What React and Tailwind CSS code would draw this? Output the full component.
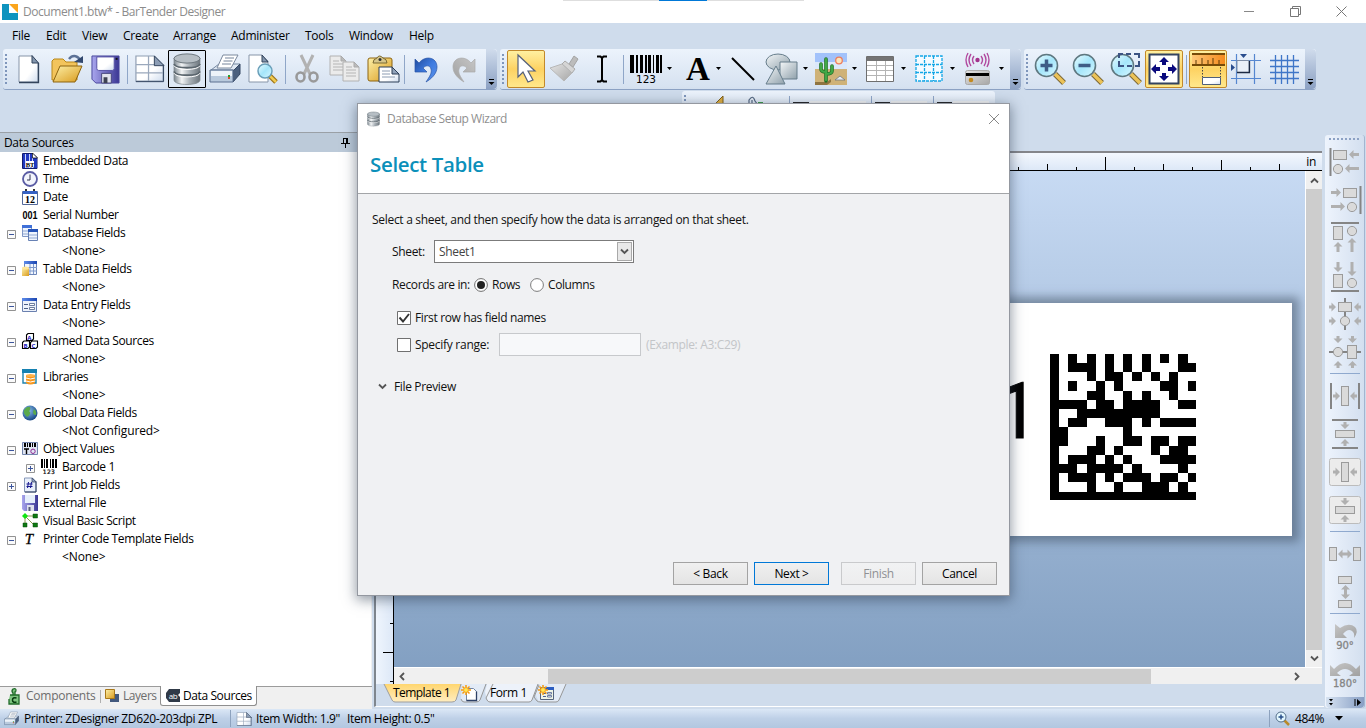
import React from "react";

const Svg = ({ w, h, children, className = "" }) => (
  <svg width={w} height={h} viewBox={`0 0 ${w} ${h}`} className={`shrink-0 block overflow-visible ${className}`} fill="none">
    {children}
  </svg>
);

const Defs = () => (
  <svg width="0" height="0" className="absolute">
    <defs>
      <linearGradient id="steel" x1="0" y1="0" x2="1" y2="0">
        <stop offset="0" stopColor="#7d8890" /><stop offset=".3" stopColor="#f2f4f5" />
        <stop offset=".6" stopColor="#aab2b8" /><stop offset="1" stopColor="#6d767d" />
      </linearGradient>
      <linearGradient id="page" x1="0" y1="0" x2="1" y2="1">
        <stop offset="0" stopColor="#fff" /><stop offset=".6" stopColor="#fff" /><stop offset="1" stopColor="#cfdcee" />
      </linearGradient>
      <linearGradient id="gold" x1="0" y1="0" x2="1" y2="1">
        <stop offset="0" stopColor="#fdf0a8" /><stop offset="1" stopColor="#d99a1c" />
      </linearGradient>
      <linearGradient id="tab" x1="0" y1="0" x2="0" y2="1">
        <stop offset="0" stopColor="#ffd66f" /><stop offset="1" stopColor="#ffedc0" />
      </linearGradient>
      <linearGradient id="violet" x1="0" y1="0" x2="1" y2="0">
        <stop offset="0" stopColor="#a9a6ee" /><stop offset="1" stopColor="#3b3794" />
      </linearGradient>
      <linearGradient id="blue" x1="0" y1="0" x2="1" y2="1">
        <stop offset="0" stopColor="#1f4a9c" /><stop offset=".5" stopColor="#3f7be0" /><stop offset="1" stopColor="#5f95ea" />
      </linearGradient>
      <linearGradient id="shape" x1="0" y1="0" x2="1" y2="1">
        <stop offset="0" stopColor="#f4f7f8" /><stop offset="1" stopColor="#8fa0ab" />
      </linearGradient>
      <linearGradient id="grayg" x1="0" y1="0" x2="1" y2="1">
        <stop offset="0" stopColor="#e4e4e4" /><stop offset="1" stopColor="#a6a6a6" />
      </linearGradient>
      <linearGradient id="grayd" x1="0" y1="0" x2="1" y2="1">
        <stop offset="0" stopColor="#c6c6c6" /><stop offset="1" stopColor="#a0a0a0" />
      </linearGradient>
      <linearGradient id="lens" x1="0" y1="0" x2="1" y2="1">
        <stop offset="0" stopColor="#eafcff" /><stop offset=".5" stopColor="#a5e6fb" /><stop offset="1" stopColor="#d8f7ff" />
      </linearGradient>
      <linearGradient id="orange" x1="0" y1="0" x2="1" y2="0">
        <stop offset="0" stopColor="#ffc877" /><stop offset="1" stopColor="#f58a1c" />
      </linearGradient>
      <linearGradient id="bluehead" x1="0" y1="0" x2="1" y2="0">
        <stop offset="0" stopColor="#5d8bea" /><stop offset="1" stopColor="#1c46b0" />
      </linearGradient>
      <radialGradient id="ocean" cx=".4" cy=".35" r=".7">
        <stop offset="0" stopColor="#8cc0f0" /><stop offset="1" stopColor="#10407f" />
      </radialGradient>
    </defs>
  </svg>
);

/* ---------- main toolbar icons ---------- */
const NewDoc = () => (
  <Svg w={24} h={30}>
    <path d="M2 2h13l6 7v19H2z" fill="url(#page)" stroke="#8795a8" /><path d="M21.500 9v19.500H2" stroke="#33445c" strokeWidth="1.300" />
    <path d="M15 1.500v7.500h6.500z" fill="#8496ae" stroke="#33445c" />
  </Svg>
);
const OpenIcon = () => (
  <Svg w={34} h={30}>
    <path d="M2 26V7l2-2h9l3 3h11v18z" fill="#f3c45c" stroke="#b88718" />
    <path d="M3 28L10 12h22l-7 16z" fill="url(#gold)" stroke="#8d6410" />
    <path d="M19 5c4-5 10-3 11 2" stroke="#5c7196" strokeWidth="2.500" /><path d="M24 8l9 1V2z" fill="#31486f" />
  </Svg>
);
const SaveIcon = ({ s = 30 }) => (
  <svg width={s} height={s} viewBox="0 0 30 30" className="block shrink-0">
    <path d="M1 1h28v28H5l-4-4z" fill="url(#violet)" stroke="#4a479c" />
    <path d="M6 2h18v12q0 2-2 2H8q-2 0-2-2z" fill="url(#page)" stroke="#5652a5" />
    <path d="M11 19h10v10H11z" fill="#e1e3ec" stroke="#44447a" /><path d="M13 23h4v6h-4z" fill="#3e4253" /><path d="M25.500 3h2v2h-2z" fill="#111" />
  </svg>
);
const TableDoc = ({ s = 32 }) => (
  <svg width={s} height={s * 0.875} viewBox="0 0 32 28" className="block shrink-0">
    <path d="M2 1h19l9 9v17H2z" fill="url(#page)" stroke="#8e9db2" strokeWidth="1.200" />
    <path d="M2 10h20M2 18.500h28M15 1v26" stroke="#9aa8bc" strokeWidth="1.300" /><path d="M30.500 10v17.500H2" stroke="#31435e" fill="none" />
    <path d="M21 1v10h10z" fill="#8c9db5" stroke="#33445c" />
  </svg>
);
const Database = ({ w = 28, h = 32 }) => (
  <svg width={w} height={h} viewBox="0 0 28 32" className="block shrink-0">
    <path d="M1 5v22c0 6 26 6 26 0V5z" fill="url(#steel)" stroke="#7c858b" strokeWidth=".7" />
    <ellipse cx="14" cy="5.500" rx="13" ry="4.600" fill="#b6bec4" stroke="#6d777e" />
    <path d="M1 11c2 5 24 5 26 0M1 18.500c2 5 24 5 26 0" stroke="#5b666e" strokeWidth="1.800" fill="none" />
    <path d="M1 12.700c2 5 24 5 26 0M1 20.200c2 5 24 5 26 0" stroke="#fff" fill="none" />
  </svg>
);
const Printer = ({ s = 32 }) => (
  <svg width={s} height={s} viewBox="0 0 32 32" className="block shrink-0">
    <path d="M2 17l8-6h21l-6 6z" fill="#dfe8f3" stroke="#7487a0" />
    <path d="M14 2h15l-7 13H8z" fill="#fff" stroke="#7b899d" /><path d="M16 5h9M14.500 8h9M13 11h9" stroke="#75849a" />
    <path d="M24 18l7-7v10l-7 8z" fill="#4a5f7e" stroke="#344763" />
    <path d="M1 17h23v12H1z" fill="#b9cadd" stroke="#5c7190" /><path d="M2 18h21v5H2z" fill="#edf3f9" /><path d="M19 22h2v2h-2z" fill="#26a32e" /><path d="M19 24h2v2h-2z" fill="#dd4a29" />
  </svg>
);
const Preview = () => (
  <Svg w={32} h={30}>
    <path d="M2 1h13l6 6v21H2z" fill="#fff" stroke="#8795a8" /><path d="M15 1v7h6z" fill="#8496ae" stroke="#33445c" />
    <path d="M21 20l8 8" stroke="#9b7016" strokeWidth="5" /><path d="M21 20l8 8" stroke="#f0ca50" strokeWidth="2.500" />
    <circle cx="18" cy="17" r="7" fill="url(#lens)" stroke="#6b9fb9" strokeWidth="1.500" />
  </Svg>
);
const Cut = () => (
  <Svg w={24} h={30}>
    <path d="M6 1l9 19M18 1L9 20" stroke="#b2b2b2" strokeWidth="3" />
    <ellipse cx="5.500" cy="23" rx="4" ry="4.500" stroke="#999" strokeWidth="2.600" /><ellipse cx="18.500" cy="23" rx="4" ry="4.500" stroke="#999" strokeWidth="2.600" />
  </Svg>
);
const Copy = () => (
  <Svg w={32} h={28}>
    {[[1, 1], [14, 7]].map(([x, y]) => (
      <g key={x} transform={`translate(${x} ${y})`}>
        <path d="M0 0h11l5 5v14H0z" fill="#ebebeb" stroke="#b2b2b2" /><path d="M11 0v5h5z" fill="#bbb" stroke="#aaa" />
        <path d="M3 5h6M3 8h10M3 11h10M3 14h10" stroke="#b5b5b5" />
      </g>
    ))}
  </Svg>
);
const Paste = () => (
  <Svg w={34} h={30}>
    <rect x="2" y="4" width="24" height="23" rx="2" fill="url(#gold)" stroke="#8d6410" />
    <path d="M7 9q0-4 4-5 2-4 6 0 4 1 4 5z" fill="#d6c68b" stroke="#7b6a33" /><circle cx="14" cy="5.500" r="1.500" fill="#333" />
    <path d="M13 13h13l7 7v8H13z" fill="url(#page)" stroke="#2d3e57" /><path d="M26 13v7h7z" fill="#93a4bb" stroke="#2d3e57" />
    <path d="M16 17h8M16 20h8M16 23h13" stroke="#8c9cb2" />
  </Svg>
);
const Undo = ({ flip }) => (
  <svg width="26" height="28" viewBox="0 0 26 28" className={flip ? "block -scale-x-100" : "block"}>
    <path d="M2 4l4 4C12 0 24 2 24 12c0 7-6 12-11 15 4-6 6-9 5-13-1-4-5-4-8-1l4 4H2z" fill={flip ? "url(#grayd)" : "url(#blue)"} stroke={flip ? "#aaa" : "#2a55a6"} strokeWidth=".7" />
  </svg>
);
const Pointer = () => (
  <Svg w={22} h={30}><path d="M3 1v22l5-5 5 10 5-2-5-9h7z" fill="#fff" stroke="#56617a" strokeWidth="1.200" /></Svg>
);
const Brush = () => (
  <Svg w={30} h={28}>
    <path d="M20 9l5-8 4 3-5 8z" fill="#bcbcbc" stroke="#a4a4a4" /><path d="M16 6l10 8-3 4-10-9z" fill="#d5d5d5" stroke="#aaa" />
    <path d="M13 9L1 13l14 13 8-8z" fill="url(#grayg)" stroke="#b7b7b7" />
  </Svg>
);
const IBeam = () => (<Svg w={14} h={28}><path d="M2 1.500h3.500L7 3l1.500-1.500H12M2 26.500h3.500L7 25l1.500 1.500H12M7 3v22" stroke="#000" strokeWidth="2" /></Svg>);
const Barcode = () => (
  <Svg w={33} h={33}>
    <path d="M0 2h4v18H0zM6 2h2v18H6zM10 2h3v18h-3zM15 2h2v18h-2zM18 2h3v18h-3zM23 2h1v18h-1zM26 2h3v18h-3zM30 2h2v18h-2z" fill="#000" />
    <text x="16" y="30" fontSize="10.500" textAnchor="middle" fill="#000" fontFamily="DejaVu Sans" letterSpacing="0">123</text>
  </Svg>
);
const LetterA = () => <span className="relative left-[3px] font-['Liberation_Serif',serif] text-[33px] font-bold leading-[36px] tracking-normal text-black">A</span>;
const LineIcon = () => <Svg w={26} h={26}><path d="M2 2l22 22" stroke="#000" strokeWidth="2" /></Svg>;
const Shapes = () => (
  <Svg w={34} h={33}>
    <ellipse cx="13" cy="9" rx="12" ry="8" fill="url(#shape)" stroke="#667d8b" />
    <path d="M15 9h17v17H15z" fill="url(#shape)" stroke="#667d8b" /><path d="M11 13l9 18H1z" fill="url(#shape)" stroke="#667d8b" />
  </Svg>
);
const Picture = () => (
  <Svg w={32} h={32}>
    <path d="M0 0h32v17H0z" fill="#a2c2fb" /><path d="M0 9h32v8H0z" fill="#dbe8fb" /><path d="M0 16h32v16H0z" fill="#cfb277" />
    <path d="M0 29h12l4-3v3l-4 3H0z" fill="#8f7440" /><circle cx="24" cy="7.500" r="3.300" fill="#fbe5bd" stroke="#ee7d5c" strokeWidth="1.300" />
    <path d="M11 6v22M6 11v5q0 3 5 3M17 13v5q0 3-6 3" stroke="#216f26" strokeWidth="3.600" strokeLinecap="round" />
    <path d="M11 6v21M6 11v5q0 3 5 3M17 13v5q0 3-6 3" stroke="#41a847" strokeWidth="2.200" strokeLinecap="round" />
    <path d="M20 27l5-4 5 4z" fill="#e5eaf1" stroke="#66707c" strokeWidth=".7" />
  </Svg>
);
const TableIcon = () => (
  <Svg w={28} h={26}>
    <path d="M.5.5h27v25H.5z" fill="#fff" stroke="#6e6e6e" /><path d="M1 1h26v4H1z" fill="#747474" />
    <path d="M1 9.500h26M1 14.500h26M1 19.500h26M10.500 5v20M19.500 5v20" stroke="#b4b4b4" />
  </Svg>
);
const DashGrid = () => (
  <Svg w={28} h={28}><path d="M1 1h26v25H1zM1 9.500h26M1 17.500h26M9.500 1v25M18.500 1v25" fill="#f5fbff" stroke="#14a7e6" strokeDasharray="3 1" strokeWidth="1.300" /></Svg>
);
const Rfid = () => (
  <Svg w={26} h={34}>
    <circle cx="12.500" cy="8" r="2.200" fill="#a3338d" />
    <path d="M9 4q-3 4 0 8M16 4q3 4 0 8M6 2q-4 6 0 12M19 2q4 6 0 12M3 1q-4 7 0 14M22 1q4 7 0 14" stroke="#b14a9f" strokeWidth="1.400" />
    <rect x=".5" y="18.500" width="24" height="14" rx="2" fill="url(#grayg)" stroke="#a9a9a9" /><path d="M1 21h23v3H1z" fill="#000" /><circle cx="6" cy="28" r="2.300" fill="#c48a1f" />
  </Svg>
);
const Magnifier = ({ kind }) => (
  <Svg w={36} h={34}>
    <path d="M23 22l9 9" stroke="#7a6736" strokeWidth="5.500" /><path d="M23 22l9 9" stroke="#ecc358" strokeWidth="3.500" />
    <circle cx="14.500" cy="13.500" r="11" fill="url(#lens)" stroke="#5f7880" strokeWidth="1.600" />
    {kind !== "area" && <path d="M8.500 13.500h12" stroke="#3f5c86" strokeWidth="3.500" />}
    {kind === "plus" && <path d="M14.500 7.500v12" stroke="#3f5c86" strokeWidth="3.500" />}
    {kind === "area" && <path d="M11 6V2h4M18 2h5M26 2h5v4M31 9v5h-4M24 14h-5M16 14h-5V9" stroke="#3c5483" strokeWidth="2" />}
  </Svg>
);
const FitIcon = () => (
  <Svg w={32} h={32}>
    <path d="M1.500 1.500h29v29h-29z" fill="#fff" stroke="#33435f" strokeWidth="2" />
    <path d="M16 4l5 5h-3v3h-4V9h-3zM16 28l5-5h-3v-3h-4v3h-3zM3 16l5-5v3h4v4H8v3zM29 16l-5-5v3h-4v4h4v3z" fill="#0a0a7d" />
  </Svg>
);
const RulerIcon = () => (
  <Svg w={33} h={32}>
    <path d="M0 1h33v11H0z" fill="url(#orange)" /><path d="M0 1h33M0 12h33" stroke="#774b08" strokeWidth="2" />
    <path d="M4 7v4M10 5v6M16 7v4M21 5v6M27 7v4" stroke="#5c3a08" /><path d="M10.500 14v10M28.500 14v10" stroke="#444" strokeDasharray="1.500 1.500" />
    <path d="M10.500 24.500h18v7h-18z" fill="url(#page)" stroke="#50607a" />
  </Svg>
);
const SnapIcon = () => (
  <Svg w={32} h={32}>
    <path d="M6.500 1v30M24.500 1v30M1 7.500h30M1 25.500h30" stroke="#5687d0" strokeWidth="1.200" />
    <path d="M7 7.500h12v12H7z" fill="#eaf0f8" stroke="#7f8ea6" /><path d="M19.500 8v11.500H7" stroke="#1d2a42" strokeWidth="1.300" />
    <path d="M10 1h7l-3.500 4zM1 11v7l4-3.500z" fill="#2a4d8e" />
  </Svg>
);
const GridIcon = () => (
  <Svg w={31} h={31}><path d="M6.500 1v29M12.500 1v29M18.500 1v29M24.500 1v29M1 6.500h29M1 12.500h29M1 18.500h29M1 24.500h29" stroke="#3f76c8" strokeWidth="1.300" /></Svg>
);

/* ---------- toolbar parts ---------- */
const Grip = () => (
  <div className="flex w-[7px] shrink-0 justify-center pt-[4px]">
    <Svg w={3} h={32}>{[0, 4, 8, 12, 16, 20, 24, 28].map((y) => <path key={y} d={`M0 ${y}h2v2H0z`} fill="#7f96bb" />)}</Svg>
  </div>
);
const Tool = ({ children, on, boxed }) => (
  <div className={`flex h-[38px] w-[38px] shrink-0 items-center justify-center ${on ? "rounded-[2px] border border-[#c2892b] bg-linear-to-b from-[#fff0a0] via-[#fdd262] to-[#ffe88b]" : ""} ${boxed ? "rounded-[1px] border border-black bg-[#dfe9f5]" : ""}`}>{children}</div>
);
const DropTool = ({ children }) => (
  <div className="flex h-[38px] w-[49px] shrink-0 items-center">
    <div className="flex w-[40px] justify-center">{children}</div>
    <Svg w={7} h={4}><path d="M1 0h5L3.500 3z" fill="#000" /></Svg>
  </div>
);
const Sep = ({ w = "w-[6px]" }) => (
  <div className={`flex ${w} h-[38px] shrink-0 items-center justify-center`}><div className="h-[29px] w-px bg-[#8fa6c8]" /></div>
);
const Overflow = () => (
  <div className="flex h-[40px] w-[11px] shrink-0 items-end justify-center rounded-r bg-linear-to-b from-[#d0dcec] to-[#8ca1c3] pb-[3px]">
    <Svg w={7} h={7}><path d="M1 .5h5" stroke="#000" /><path d="M.5 3h6L3.500 6z" fill="#000" /></Svg>
  </div>
);
const bar = "flex h-[41px] shrink-0 rounded-[3px] border-b border-[#8ca2c4] bg-linear-to-b from-[#ecf3fc] to-[#d5e1f0]";

/* ---------- tree ---------- */
const mini = {
  embedded: <g><path d="M.5.500h10l4.500 4V15.500H.5z" fill="#c9d4fb" stroke="#101c6e" /><path d="M1 1h2v14H1zM4 1h3v14H4zM8 1h2v14H8zM11 5h4v10h-4z" fill="#2138c0" /><path d="M10.500 0v5h5z" fill="#fff" stroke="#000" strokeWidth=".7" /><path d="M4 8h8v6.500H4z" fill="#fff" /><text x="8" y="13.500" fontSize="6.500" fontWeight="700" textAnchor="middle" fill="#000" fontFamily="Liberation Serif" letterSpacing="0">BT</text></g>,
  time: <g><circle cx="8" cy="8" r="7" fill="#f3f5fd" stroke="#5a5ca4" strokeWidth="1.800" /><path d="M8 3.500V9H5" stroke="#30324f" /></g>,
  date: <g><path d="M.5 2.500h15v13H.5z" fill="#fff" stroke="#53699a" /><path d="M1 2h14v3H1z" fill="#3561c4" /><path d="M3 0h2v2H3zM11 0h2v2h-2z" fill="#333" /><text x="8" y="14" fontSize="10" fontWeight="700" textAnchor="middle" fill="#000" fontFamily="Liberation Serif" letterSpacing="0">12</text></g>,
  serial: <text x="8" y="12" fontSize="10" fontWeight="700" textAnchor="middle" textLength="15" lengthAdjust="spacingAndGlyphs" fill="#000" fontFamily="Liberation Sans" letterSpacing="0">001</text>,
  database: <g><path d="M.5.500h9v11h-9z" fill="#eef4fd" stroke="#8198c6" /><path d="M0 0h10v3H0z" fill="#3f70d8" /><path d="M1 6h8M1 9h8" stroke="#8fa7d3" /><path d="M6.500 4.500h9v11h-9z" fill="#eef4fd" stroke="#6781b4" /><path d="M6 4h10v3H6z" fill="#2453b8" /><path d="M7 10h8M7 13h8" stroke="#8fa7d3" /></g>,
  table: <g><path d="M2.500.500h12v13h-12z" fill="#f1f6fe" stroke="#6c85b8" /><path d="M2 0h13v3H2z" fill="url(#bluehead)" /><path d="M3 6.500h12M3 10h12M8 3v10M11.500 3v10" stroke="#7f99cb" /><path d="M0 7h7v8H0z" fill="url(#gold)" /><ellipse cx="3.500" cy="7" rx="3.500" ry="1.500" fill="#ffe69a" /></g>,
  entry: <g><path d="M.5 1.500h14v13H.5z" fill="#edf2fb" stroke="#6a80af" /><path d="M0 1h15v3H0z" fill="url(#bluehead)" /><path d="M2 7.500h4M2 11.500h4" stroke="#4c5e85" /><path d="M7.500 6.500h5v2h-5zM7.500 10.500h5v2h-5z" fill="#fff" stroke="#4c5e85" strokeWidth=".8" /></g>,
  named: <g stroke="#000" strokeWidth="1.100"><path d="M4.500 2l1.500-1.500h5.500V6L10 7.500H4.500zM.5 9.500L2 8h5.500v6L6 15.500H.500zM8.500 9.500L10 8h5.500v6L14 15.500H8.500z" fill="#fff" /><text x="5.300" y="7" fontSize="6" fontWeight="700" fill="#1414c0" stroke="none">A</text><text x="1.500" y="14.500" fontSize="6" fontWeight="700" fill="#1414c0" stroke="none">B</text><text x="9.500" y="14.500" fontSize="6" fontWeight="700" fill="#1414c0" stroke="none">C</text></g>,
  libraries: <g><path d="M1 1h13v13H1z" fill="#fff" stroke="#1d83b0" strokeWidth="1.400" /><path d="M0 0h15v4H0z" fill="#1681b1" /><path d="M4 6v8q4.500 3 9 0V6z" fill="#f8971d" /><ellipse cx="8.500" cy="6.500" rx="4.500" ry="1.500" fill="#ffb24a" /><path d="M4 9q4.500 2 9 0M4 12q4.500 2 9 0" stroke="#fff" /></g>,
  globe: <g><circle cx="8" cy="8" r="7.500" fill="url(#ocean)" /><path d="M2 5q3-4 6-3 1 3-1 4 2 1 1 3-2 4-4 2-3-3-2-6zM12 4q3 2 2 6-3 0-3-3z" fill="#5aa94b" /></g>,
  object: <g><path d="M.5 1.500h15v12H.5z" fill="#dfe5f3" stroke="#7385ad" /><path d="M2 2h2v4H2zM5 2h1v4H5zM7 2h2v4H7zM10 2h1v4h-1zM12 2h2v4h-2z" fill="#000" /><path d="M2 8h5M4.500 8v5" stroke="#000" strokeWidth="1.400" /><circle cx="11" cy="10.300" r="2.200" stroke="#8d2a94" /></g>,
  barcode: <g><path d="M0 0h2v9H0zM3 0h1v9H3zM5 0h2v9H5zM9 0h1v9H9zM11 0h2v9h-2zM14 0h2v9h-2z" fill="#000" /><text x="8" y="14.500" fontSize="6" textAnchor="middle" fill="#000" stroke="#000" strokeWidth=".2" fontFamily="DejaVu Sans" letterSpacing="0.3">123</text></g>,
  printjob: <g><path d="M2.500 1h8l3.500 3.500V15H2.500z" fill="#e9f0fb" stroke="#8697b8" /><path d="M14 4.500V15H3" stroke="#2d3c5c" /><path d="M10 1v4h4z" fill="#8fa3c7" stroke="#33415f" strokeWidth=".7" /><path d="M6.500 5l-1 6M9.500 5l-1 6M4.500 7h6M4.500 9.500h6" stroke="#161690" /></g>,
  file: <g><path d="M0 0h16v16H2l-2-2z" fill="url(#violet)" /><path d="M3 0h10v8H3z" fill="#e6effc" /><path d="M5 10h7v6H5z" fill="#dfe1ee" /><path d="M6.500 12h2v4h-2z" fill="#555b78" /></g>,
  script: <g><path d="M3 3h10M3 3v9M3 3l9 9" stroke="#8a9a50" /><path d="M3 0l3 3-3 3-3-3z" fill="#10e512" /><path d="M11 1h4.500v4H11zM1 10h4v4H1zM11 10h4.500v4H11z" fill="#0d7a12" stroke="#0a4b0d" strokeWidth=".5" /></g>,
  template: <text x="7" y="12.500" fontSize="15" fontStyle="italic" textAnchor="middle" fill="#000" stroke="#000" strokeWidth=".3" fontFamily="Liberation Serif" letterSpacing="0">T</text>,
};
const rows = [
  ["Embedded Data", "embedded"], ["Time", "time"], ["Date", "date"], ["Serial Number", "serial"],
  ["Database Fields", "database", "-"], ["<None>"], ["Table Data Fields", "table", "-"], ["<None>"],
  ["Data Entry Fields", "entry", "-"], ["<None>"], ["Named Data Sources", "named", "-"], ["<None>"],
  ["Libraries", "libraries", "-"], ["<None>"], ["Global Data Fields", "globe", "-"], ["<Not Configured>"],
  ["Object Values", "object", "-"], ["Barcode 1", "barcode", "+", true], ["Print Job Fields", "printjob", "+"],
  ["External File", "file"], ["Visual Basic Script", "script"], ["Printer Code Template Fields", "template", "-"], ["<None>"],
];
const TreeRow = ({ row: [label, icon, exp, child] }) => (
  <div className={`flex h-[18px] items-center ${child ? "pl-[26px]" : "pl-[7px]"}`}>
    <div className="w-[15px] shrink-0 pt-[2px]">
      {exp && (
        <Svg w={9} h={9}><path d="M.5.500h8v8h-8z" fill="#fafafa" stroke="#929292" /><path d="M2 4.500h5" stroke="#3c559c" />{exp === "+" && <path d="M4.500 2v5" stroke="#3c559c" />}</Svg>
      )}
    </div>
    {icon ? <div className="w-[21px] shrink-0"><Svg w={16} h={16}>{mini[icon]}</Svg></div> : <div className="w-[40px]" />}
    <span className={icon ? "tracking-[-0.38px]" : "tracking-[-0.1px]"}>{label}</span>
  </div>
);

/* ---------- align toolbar icons ---------- */
const R = (x, y, w, h) => <rect x={x} y={y} width={w} height={h} fill="#dadada" stroke="#9b9b9b" strokeWidth="1" />;
const C = (x, y) => <circle cx={x} cy={y} r="4.600" fill="#dadada" stroke="#9b9b9b" strokeWidth="1" />;
const L = (d) => <path d={d} stroke="#858585" strokeWidth="2" />;
const Arrow = ({ x, y, len = 7, dir }) => {
  const rot = { r: 0, d: 90, l: 180, u: 270 }[dir];
  return <path transform={`translate(${x} ${y}) rotate(${rot})`} d={`M0-1.500H${len - 4.5}V-4.500L${len} 0L${len - 4.5} 4.500V1.500H0z`} fill="#b0b0b0" />;
};
const Align = ({ children }) => <Svg w={38} h={38}>{children}</Svg>;
const HSep = ({ h = "h-[6px]" }) => <div className={`flex ${h} items-center px-[4px]`}><div className="h-px w-full bg-[#8fa9ce]" /></div>;

function AlignBar() {
  return (
    <div className="mt-[3px] flex h-[573px] w-[40px] shrink-0 flex-col rounded-[3px] border-r border-[#a3b5d0] bg-linear-to-r from-[#eef4fd] to-[#d3dfef] pl-px">
      <div className="flex h-[8px] items-center justify-center"><Svg w={32} h={2}>{[0, 1, 2, 3, 4, 5, 6, 7].map((i) => <path key={i} d={`M${i * 4} 0h2v2h-2z`} fill="#8ca1c4" />)}</Svg></div>
      <Align>{L("M4.500 5v28")}{R(7.5, 7.5, 13, 9)}{C(12, 26)}<Arrow x={33} y={11.5} len={10} dir="l" /><Arrow x={33} y={25.5} len={14} dir="l" /></Align>
      <Align>{L("M34.500 5v28")}{R(17.5, 7.5, 13, 9)}{C(26, 26)}<Arrow x={5} y={11.5} len={10} dir="r" /><Arrow x={5} y={25.5} len={14} dir="r" /></Align>
      <Align>{L("M5 4h28")}{R(7.5, 7.5, 9, 13)}{C(26, 12)}<Arrow x={12} y={33} len={10} dir="u" /><Arrow x={26} y={33} len={14} dir="u" /></Align>
      <Align>{L("M5 34h28")}{R(7.5, 17.5, 9, 13)}{C(26, 26)}<Arrow x={12} y={5} len={10} dir="d" /><Arrow x={26} y={5} len={14} dir="d" /></Align>
      <Align>{L("M19 3v32")}{R(12.5, 7.5, 13, 9)}{C(19, 26)}<Arrow x={3} y={12} dir="r" /><Arrow x={35} y={12} dir="l" /><Arrow x={3} y={26} dir="r" /><Arrow x={35} y={26} dir="l" /></Align>
      <Align>{L("M3 19h32")}{C(12, 19)}{R(21.5, 12.5, 9, 13)}<Arrow x={12} y={3} dir="d" /><Arrow x={26.5} y={3} dir="d" /><Arrow x={12} y={35} dir="u" /><Arrow x={26.5} y={35} dir="u" /></Align>
      <HSep h="h-[5px]" />
      <Align>{L("M5 7v26M33 7v26")}{R(15.5, 10.5, 7, 19)}<Arrow x={7} y={20} dir="r" /><Arrow x={31} y={20} dir="l" /></Align>
      <Align>{L("M6 6h26M6 34h26")}{R(9.5, 16.5, 19, 7)}<Arrow x={19} y={8} dir="d" /><Arrow x={19} y={32} dir="u" /></Align>
      <Align><rect x="3.500" y="6.500" width="31" height="27" rx="2" fill="#ececec" stroke="#bcbcbc" />{R(15.5, 10.5, 7, 19)}<Arrow x={7} y={20} dir="r" /><Arrow x={31} y={20} dir="l" /></Align>
      <Align><rect x="3.500" y="6.500" width="31" height="27" rx="2" fill="#ececec" stroke="#bcbcbc" />{R(9.5, 16.5, 19, 7)}<Arrow x={19} y={8} dir="d" /><Arrow x={19} y={32} dir="u" /></Align>
      <HSep />
      <Align>{R(3.5, 13.5, 7, 13)}{R(27.5, 13.5, 7, 13)}<Arrow x={19} y={20} dir="r" /><Arrow x={19} y={20} dir="l" /></Align>
      <Align>{R(12.5, 4.5, 13, 7)}{R(12.5, 28.5, 13, 7)}<Arrow x={19.5} y={20} dir="u" /><Arrow x={19.5} y={20} dir="d" /></Align>
      <HSep h="h-[7px]" />
      <Align><path d="M9 7v14h12l-4-4q5-6 9-3 3 2 2 7 5-7 1-11-6-5-15 1z" fill="url(#grayd)" /><text x="19" y="32" fontSize="10" textAnchor="middle" fill="#858585" stroke="#858585" strokeWidth=".3" fontFamily="DejaVu Sans" letterSpacing="0">90°</text></Align>
      <Align><path d="M4 10v11h11l-4-3q8-8 16 0l-4 3h11V10l-4 4Q19 2 8 14z" fill="url(#grayd)" /><text x="19" y="32" fontSize="10" textAnchor="middle" fill="#858585" stroke="#858585" strokeWidth=".3" fontFamily="DejaVu Sans" letterSpacing="0">180°</text></Align>
      <div className="mt-auto flex h-[11px] items-center justify-between rounded-b bg-linear-to-r from-[#d6e2f1] to-[#889fc4] px-[3px]">
        <Svg w={4} h={7}><path d="M0 0h4L2 2.500zM0 4h4L2 6.500z" fill="#000" /></Svg>
        <Svg w={7} h={7}><path d="M1 0v7" stroke="#000" /><path d="M3 0v7l4-3.500z" fill="#000" /></Svg>
      </div>
    </div>
  );
}

/* ---------- design canvas ---------- */
const matrix = [
  "1010101010101010", "1011101010100011", "1000101101010100", "1010010100001101",
  "1000110010100100", "1111011011110011", "1001111111110000", "1011001110101111",
  "1100000010000000", "1100010011011011", "1000110100010110", "1011101010001111",
  "1110111101000010", "1011101011101101", "1000100100111010", "1111111111111111",
];
const edges = [0, 9, 18, 27, 37, 46, 55, 64, 73, 82, 92, 101, 110, 119, 128, 138, 146];
const DataMatrix = () => (
  <svg width="146" height="146" className="block shrink-0" shapeRendering="crispEdges">
    {matrix.map((r, y) => [...r].map((v, x) => v === "1" && <rect key={`${x}-${y}`} x={edges[x]} y={edges[y]} width={edges[x + 1] - edges[x]} height={edges[y + 1] - edges[y]} fill="#000" />))}
  </svg>
);
const Chevron = ({ dir, s = 9 }) => (
  <svg width={s} height={s} viewBox="0 0 9 9" fill="none" className="block shrink-0">
    <path d={{ u: "M1 6.500L4.500 3 8 6.500", d: "M1 2.500L4.500 6 8 2.500", l: "M6 1L2.500 4.500 6 8", r: "M3 1l3.500 3.500L3 8" }[dir]} stroke="#555" strokeWidth="1.800" />
  </svg>
);
const Burst = () => (
  <g><path d="M5 0v10M0 5h10M1.500 1.500l7 7M8.500 1.500l-7 7" stroke="#f79a0c" strokeWidth="1.500" /><circle cx="5" cy="5" r="2.300" fill="#ffe957" stroke="#f7a81c" strokeWidth=".8" /></g>
);

function Designer() {
  const ticks = [];
  for (let i = -23; i <= 7; i++) ticks.push([1105 + i * 29 - 376, i % 8 === 0 ? 13 : i % 4 === 0 ? 10 : i % 2 === 0 ? 6 : 3]);
  return (
    <div className="mt-[19px] flex h-[556px] w-[950px] shrink-0 flex-col border-b border-l-2 border-b-white border-l-[#7f868e]">
      <div className="flex h-[20px] w-[946px] shrink-0 items-center justify-end border-b border-t-2 border-b-black border-t-[#85868b] bg-linear-to-b from-[#f4f8fe] to-[#dde8f7] pr-[6px]">
        <div className="flex-1 self-end overflow-hidden"><Svg w={924} h={13}>{ticks.map(([x, h]) => <path key={x} d={`M${x + 0.5} ${13 - h}v${h}`} stroke="#000" />)}</Svg></div>
        <span className="text-[12px]">in</span>
      </div>
      <div className="flex h-[513px] shrink-0">
        <div className="w-[18px] shrink-0 border-r border-black bg-linear-to-r from-[#eff5fd] to-[#dde8f7]">
          <Svg w={17} h={513}>{[[452, 3], [481, 10], [510, 3]].map(([y, l]) => <path key={y} d={`M${17 - l} ${y}.5H17`} stroke="#000" />)}</Svg>
        </div>
        <div className="w-[928px]">
          <div className="flex h-[496px]">
            <div className="flex w-[911px] shrink-0 items-start overflow-hidden bg-linear-to-b from-[#c7daf3] to-[#83a0c2] pt-[132px]">
              <div className="ml-[120px] flex h-[233px] w-[778px] items-start justify-end bg-white pr-[96px] pt-[51px] shadow-[1px_0_9px_6px_rgba(70,85,105,0.55)]">
                <span className="mr-[11px] mt-[18px] font-['Roboto',sans-serif] text-[77px] leading-[80px] tracking-normal text-black [-webkit-text-stroke:1px_black]">1</span>
                <DataMatrix />
              </div>
            </div>
            <div className="flex w-[17px] shrink-0 flex-col items-center border-l border-white bg-[#f0f0f0]">
              <div className="flex h-[18px] items-center"><Chevron dir="u" /></div>
              <div className="w-full flex-1 bg-[#cdcdcd]" />
              <div className="flex h-[17px] items-center"><Chevron dir="d" /></div>
            </div>
          </div>
          <div className="flex h-[17px] items-center border-t border-white bg-[#f0f0f0] pl-[4px]">
            <Chevron dir="l" />
            <div className="ml-[141px] h-[15px] w-[603px] bg-[#cdcdcd]" />
            <div className="ml-[141px]"><Chevron dir="r" /></div>
          </div>
        </div>
      </div>
      <div className="flex h-[19px] pl-[8px]">
        <div className="relative h-[19px] w-[190px]">
          <Svg w={190} h={19}>
            <path d="M154 1l-3 8 3 7q1 2 3 2h15q2 0 3-2l7-16h-26z" fill="#e3ebf6" /><path d="M155 1l-5 12 3 4q1 1 4 1h15q2 0 3-2l7-16" stroke="#979797" />
            <path d="M103 0l-2 8 2 8q1 2 3 2h39q2 0 3-2l6-16z" fill="#edf2fa" /><path d="M109 0l-7 14 1 2q1 2 3 2h39q2 0 3-2l6-16" stroke="#979797" />
            <path d="M78 0l-1 15q1 3 3 3h12q3 0 4-2l6-16z" fill="#e3ebf6" /><path d="M77 15q1 3 3 3h12q3 0 4-2l6-16" stroke="#979797" />
            <path d="M0 0l8 16q1 2 3 2h57q3 0 4-2l5-16z" fill="url(#tab)" /><path d="M0 0l8 16q1 2 3 2h57q3 0 4-2l5-16" stroke="#9e9e9e" />
            <g transform="translate(77 1)"><path d="M5.500 3.500h7l3 3v9h-10z" fill="#fff" stroke="#7687a2" /><path d="M15.500 6.500v9h-10" stroke="#2d4066" strokeWidth="1.300" /><Burst /></g>
            <g transform="translate(154 1)"><path d="M2.500 2.500h13v12h-13z" fill="#eef3e6" stroke="#53637d" /><path d="M3 2h13v3H3z" fill="#2c5dc0" /><path d="M5 8.500h3M5 11.500h3" stroke="#4d6190" /><path d="M9.500 7.500h4v1.500h-4zM9.500 10.500h4v1.500h-4z" fill="#fff" stroke="#4d6190" strokeWidth=".8" /><Burst /></g>
          </Svg>
          <div className="absolute left-[9px] top-0 leading-[18px] tracking-[-0.55px] text-black">Template 1</div>
          <div className="absolute left-[106px] top-0 leading-[18px] tracking-[-0.4px] text-black">Form 1</div>
        </div>
      </div>
    </div>
  );
}

/* ---------- wizard ---------- */
const Btn = ({ children, className = "" }) => (
  <button className={`h-[23px] w-[75px] border bg-linear-to-b text-center ${className || "border-[#a3a3a3] from-[#f0f0f0] to-[#e4e4e4] text-black"}`}>{children}</button>
);
function Wizard() {
  return (
    <div className="absolute left-[357px] top-[103px] flex h-[493px] w-[653px] flex-col border border-[#9498a0] bg-[#f0f1f3] shadow-[0_3px_12px_1px_rgba(40,55,75,0.5)]">
      <div className="h-[90px] border-b border-[#a3a5a8] bg-white">
        <div className="flex h-[29px] items-center pl-[9px] pr-[9px]">
          <Database w={13} h={16} />
          <span className="ml-[7px] flex-1 tracking-[-0.48px] text-[#8f8f8f]">Database Setup Wizard</span>
          <Svg w={12} h={12}><path d="M1 1l10 10M11 1L1 11" stroke="#888" strokeWidth="1" /></Svg>
        </div>
        <h1 className="mt-[17px] pl-[12px] text-[20.5px] font-semibold leading-[28px] tracking-[-0.35px] text-[#0b90ba]">Select Table</h1>
      </div>
      <div className="flex flex-1 flex-col pt-[13px] text-[#111]">
        <p className="h-[25px] pl-[14px] leading-[26px] tracking-[-0.3px]">Select a sheet, and then specify how the data is arranged on that sheet.</p>
        <div className="flex h-[38px] items-center pl-[34px]">
          <span className="w-[42px] pt-px">Sheet:</span>
          <div className="flex h-[23px] w-[200px] items-center justify-between border border-[#7b7b7b] bg-white pl-[4px] pr-px text-[#444]">
            <span className="pt-px">Sheet1</span>
            <div className="flex h-[19px] w-[15px] items-center justify-center border border-[#a9a9a9] bg-[#e8e8e8]"><Chevron dir="d" /></div>
          </div>
        </div>
        <div className="flex h-[29px] items-center pl-[34px]">
          <span className="w-[82px]">Records are in:</span>
          <Svg w={14} h={14}><circle cx="7" cy="7" r="6.400" fill="#fff" stroke="#6f6f6f" /><circle cx="7" cy="7" r="4" fill="#222" /></Svg>
          <span className="ml-[4px] w-[38px]">Rows</span>
          <Svg w={14} h={14}><circle cx="7" cy="7" r="6.400" fill="#fff" stroke="#7c7c7c" /></Svg>
          <span className="ml-[4px] tracking-[-0.4px]">Columns</span>
        </div>
        <div className="mt-[4px] flex h-[29px] items-center pl-[39px]">
          <Svg w={14} h={14}><path d="M.5.500h13v13H.5z" fill="#fff" stroke="#707070" /><path d="M2.500 6.500l3.500 4 6-7.500" stroke="#333" strokeWidth="1.900" /></Svg>
          <span className="ml-[4px]">First row has field names</span>
        </div>
        <div className="mt-px flex h-[23px] items-center pl-[39px]">
          <Svg w={14} h={14}><path d="M.5.500h13v13H.5z" fill="#fff" stroke="#707070" /></Svg>
          <span className="ml-[4px] w-[84px] tracking-[-0.28px]">Specify range:</span>
          <div className="h-[23px] w-[142px] border border-[#c7c9cc] bg-[#f7f8fa]" />
          <span className="ml-[5px] text-[#c3c5c8]">(Example: A3:C29)</span>
        </div>
        <div className="mt-[18px] flex h-[25px] items-center pl-[20px]"><Chevron dir="d" /><span className="ml-[7px]">File Preview</span></div>
        <div className="mb-[10px] mt-auto flex justify-end pr-[12px]">
          <Btn>&lt; Back</Btn>
          <div className="w-[6px]" />
          <Btn className="border-[#0078d7] from-[#f0f0f0] to-[#e4e4e4] text-black">Next &gt;</Btn>
          <div className="w-[12px]" />
          <Btn className="border-[#c9cacc] from-[#f1f2f3] to-[#ededee] text-[#8f9194]">Finish</Btn>
          <div className="w-[6px]" />
          <Btn>Cancel</Btn>
        </div>
      </div>
    </div>
  );
}

export default function App() {
  return (
    <div className="relative flex h-[728px] w-[1366px] flex-col overflow-hidden bg-[#cfdcec] font-['Open_Sans','Noto_Sans',sans-serif] text-[12px] leading-[16px] tracking-[-0.35px] text-black whitespace-nowrap">
      <Defs />
      <div className="flex h-[23px] shrink-0 items-center bg-white pl-[2px]">
        <Svg w={16} h={16}><path d="M0 0h7v9h9v7H0z" fill="#0e93be" /><path d="M7 0h9v9z" fill="#fba51c" /><path d="M7 1l8 8H7z" fill="#fff" /></Svg>
        <span className="ml-[5px] flex-1 tracking-[-0.45px] text-[#8c8c8c]">Document1.btw* - BarTender Designer</span>
        <div className="flex items-center gap-[35px] pr-[19px]">
          <Svg w={11} h={11}><path d="M0 5.500h10" stroke="#888" /></Svg>
          <Svg w={11} h={11}><path d="M.5 2.500h8v8h-8zM2.500 2.500v-2h8v8h-2" stroke="#777" /></Svg>
          <Svg w={11} h={11}><path d="M.5.500l10 10M10.500.500l-10 10" stroke="#777" /></Svg>
        </div>
      </div>
      <div className="absolute left-[563px] top-0 h-px w-[241px] bg-[#dedede]"><div className="ml-[96px] h-px w-[48px] bg-[#0078d7]" /></div>

      <div className="flex h-[26px] shrink-0 items-center pl-[12px] text-[12px] tracking-[-0.25px]">
        <span className="w-[34px]">File</span><span className="w-[36px]">Edit</span><span className="w-[41px]">View</span><span className="w-[50px]">Create</span>
        <span className="w-[58px]">Arrange</span><span className="w-[74px]">Administer</span><span className="w-[44px]">Tools</span><span className="w-[60px]">Window</span><span>Help</span>
      </div>

      <div className="flex h-[42px] shrink-0 pl-[3px]">
        <div className={`${bar} w-[494px] pt-px`}>
          <Grip /><Tool><NewDoc /></Tool><Tool><OpenIcon /></Tool><Tool><SaveIcon s={29} /></Tool><Sep />
          <Tool><TableDoc s={31} /></Tool><Tool boxed><Database /></Tool><Tool><Printer /></Tool><Tool><Preview /></Tool><Sep />
          <Tool><Cut /></Tool><Tool><Copy /></Tool><Tool><Paste /></Tool><Sep w="w-[5px]" />
          <Tool><Undo /></Tool><Tool><Undo flip /></Tool>
          <div className="-mt-px ml-auto"><Overflow /></div>
        </div>
        <div className={`${bar} ml-[3px] w-[521px] pt-px`}>
          <Grip /><Tool on><Pointer /></Tool><Tool><Brush /></Tool><Tool><IBeam /></Tool><Sep w="w-[5px]" />
          <DropTool><Barcode /></DropTool><DropTool><LetterA /></DropTool><Tool><LineIcon /></Tool><DropTool><Shapes /></DropTool>
          <DropTool><Picture /></DropTool><DropTool><TableIcon /></DropTool><DropTool><DashGrid /></DropTool><DropTool><Rfid /></DropTool>
          <div className="-mt-px ml-auto"><Overflow /></div>
        </div>
        <div className={`${bar} ml-[3px] w-[292px] pt-px`}>
          <Grip /><Tool><Magnifier kind="plus" /></Tool><Tool><Magnifier kind="minus" /></Tool><Tool><Magnifier kind="area" /></Tool><Tool on><FitIcon /></Tool>
          <Sep w="w-[6px]" /><Tool on><RulerIcon /></Tool><Tool><SnapIcon /></Tool><Tool><GridIcon /></Tool>
          <div className="-mt-px ml-auto"><Overflow /></div>
        </div>
      </div>

      <div className="flex h-[41px] shrink-0 pl-[682px]">
        <div className={`${bar} w-[313px]`}>
          <Grip />
          <Svg w={300} h={20}>
            <path d="M24 15l10-10v10z" fill="#e3b03e" stroke="#7c5d16" /><path d="M60 14V9q4-6 6 1l3 4M63 12V9" stroke="#52657f" strokeWidth="1.200" /><path d="M69 11h5v4h-5z" fill="#3c9c46" />
            <path d="M100.500 5v15M182.500 5v15M244.500 5v15" stroke="#8fa6c8" /><path d="M104 12h16M186 12h15M248 12h15" stroke="#222" strokeWidth="2" /><path d="M121 10h56v5h-56zM202 10h36v5h-36zM264 10h36v5h-36z" fill="#f6f6f6" />
          </Svg>
        </div>
      </div>

      <div className="flex h-[577px] shrink-0">
        <div className="mr-[2px] flex w-[372px] shrink-0 flex-col bg-[#f0f0f0]">
          <div className="flex h-[20px] shrink-0 items-center justify-between border-t border-[#9aa0a6] bg-[#bccad9] pl-[4px] pr-[22px]">
            <span>Data Sources</span>
            <Svg w={9} h={11}><path d="M2.500 1v5M2 1.500h5M5.500 1v5M6.500 1v5M0 6.500h9M4.500 7v4" stroke="#000" /></Svg>
          </div>
          <div className="h-[534px] w-[371px] shrink-0 bg-white">{rows.map((r, i) => <TreeRow key={i} row={r} />)}</div>
          <div className="flex h-[23px] items-start border-t border-[#9b9b9b] text-[#6d6d6d]">
            <div className="flex h-[18px] w-[100px] items-center pl-[7px]">
              <Svg w={16} h={17}><path d="M3 7h9v9H2v-5M6 7V5q-2-2 0-4 3-1 3 1 0 2-1 2v3" fill="#7cc47f" stroke="#216b2a" strokeWidth="1.300" /><path d="M9.500 10q-4-1-4 2t4 2" stroke="#053b0d" strokeWidth="1.500" /></Svg>
              <span className="ml-[3px] tracking-[-0.25px]">Components</span>
            </div>
            <div className="mt-[3px] h-[13px] w-px bg-[#b0b0b0]" />
            <div className="flex h-[18px] w-[59px] items-center pl-[4px]">
              <Svg w={14} h={14}><path d="M5 5h9v8H5z" fill="#42587d" /><path d="M.5.500h9v9h-9z" fill="url(#gold)" stroke="#a9781a" /></Svg><span className="ml-[4px] tracking-[-0.45px]">Layers</span>
            </div>
            <div className="-mt-px flex h-[20px] w-[97px] items-center rounded-b-[3px] border border-t-0 border-[#8f8f8f] bg-white pl-[5px] text-black">
              <Svg w={14} h={13}><path d="M3 0h11v4l-2 2 2 2v5H3L0 9V4z" fill="#303a48" /><text x="7" y="9.500" fontSize="8" textAnchor="middle" fill="#fff">ab</text></Svg><span className="ml-[3px] tracking-[-0.4px]">Data Sources</span>
            </div>
          </div>
        </div>
        <Designer />
        <div className="w-px" />
        <AlignBar />
      </div>

      <div className="flex h-[19px] shrink-0 items-center bg-linear-to-b from-[#dbe7f6] via-[#bed0e7] to-[#b2c7e0] pl-[4px]">
        <Printer s={15} /><span className="ml-[5px] w-[206px] tracking-[-0.37px]">Printer: ZDesigner ZD620-203dpi ZPL</span>
        <div className="h-[17px] w-px bg-[#8da2be]" />
        <div className="ml-[5px]"><TableDoc s={16} /></div><span className="ml-[4px] w-[91px]">Item Width: 1.9"</span><span className="flex-1">Item Height: 0.5"</span>
        <div className="mr-[5px] h-[17px] w-px bg-[#8da2be]" />
        <Svg w={15} h={15}><path d="M9 9l5 5" stroke="#b98a2a" strokeWidth="2.500" /><circle cx="6" cy="6" r="5" fill="#e4f8ff" stroke="#55708b" /><path d="M3.500 6h5M6 3.500v5" stroke="#294f8a" strokeWidth="1.500" /></Svg>
        <span className="ml-[5px] w-[40px]">484%</span>
        <Svg w={8} h={5} className="mr-[23px]"><path d="M0 0h8L4 4.500z" fill="#000" /></Svg>
      </div>

      <Wizard />
    </div>
  );
}
